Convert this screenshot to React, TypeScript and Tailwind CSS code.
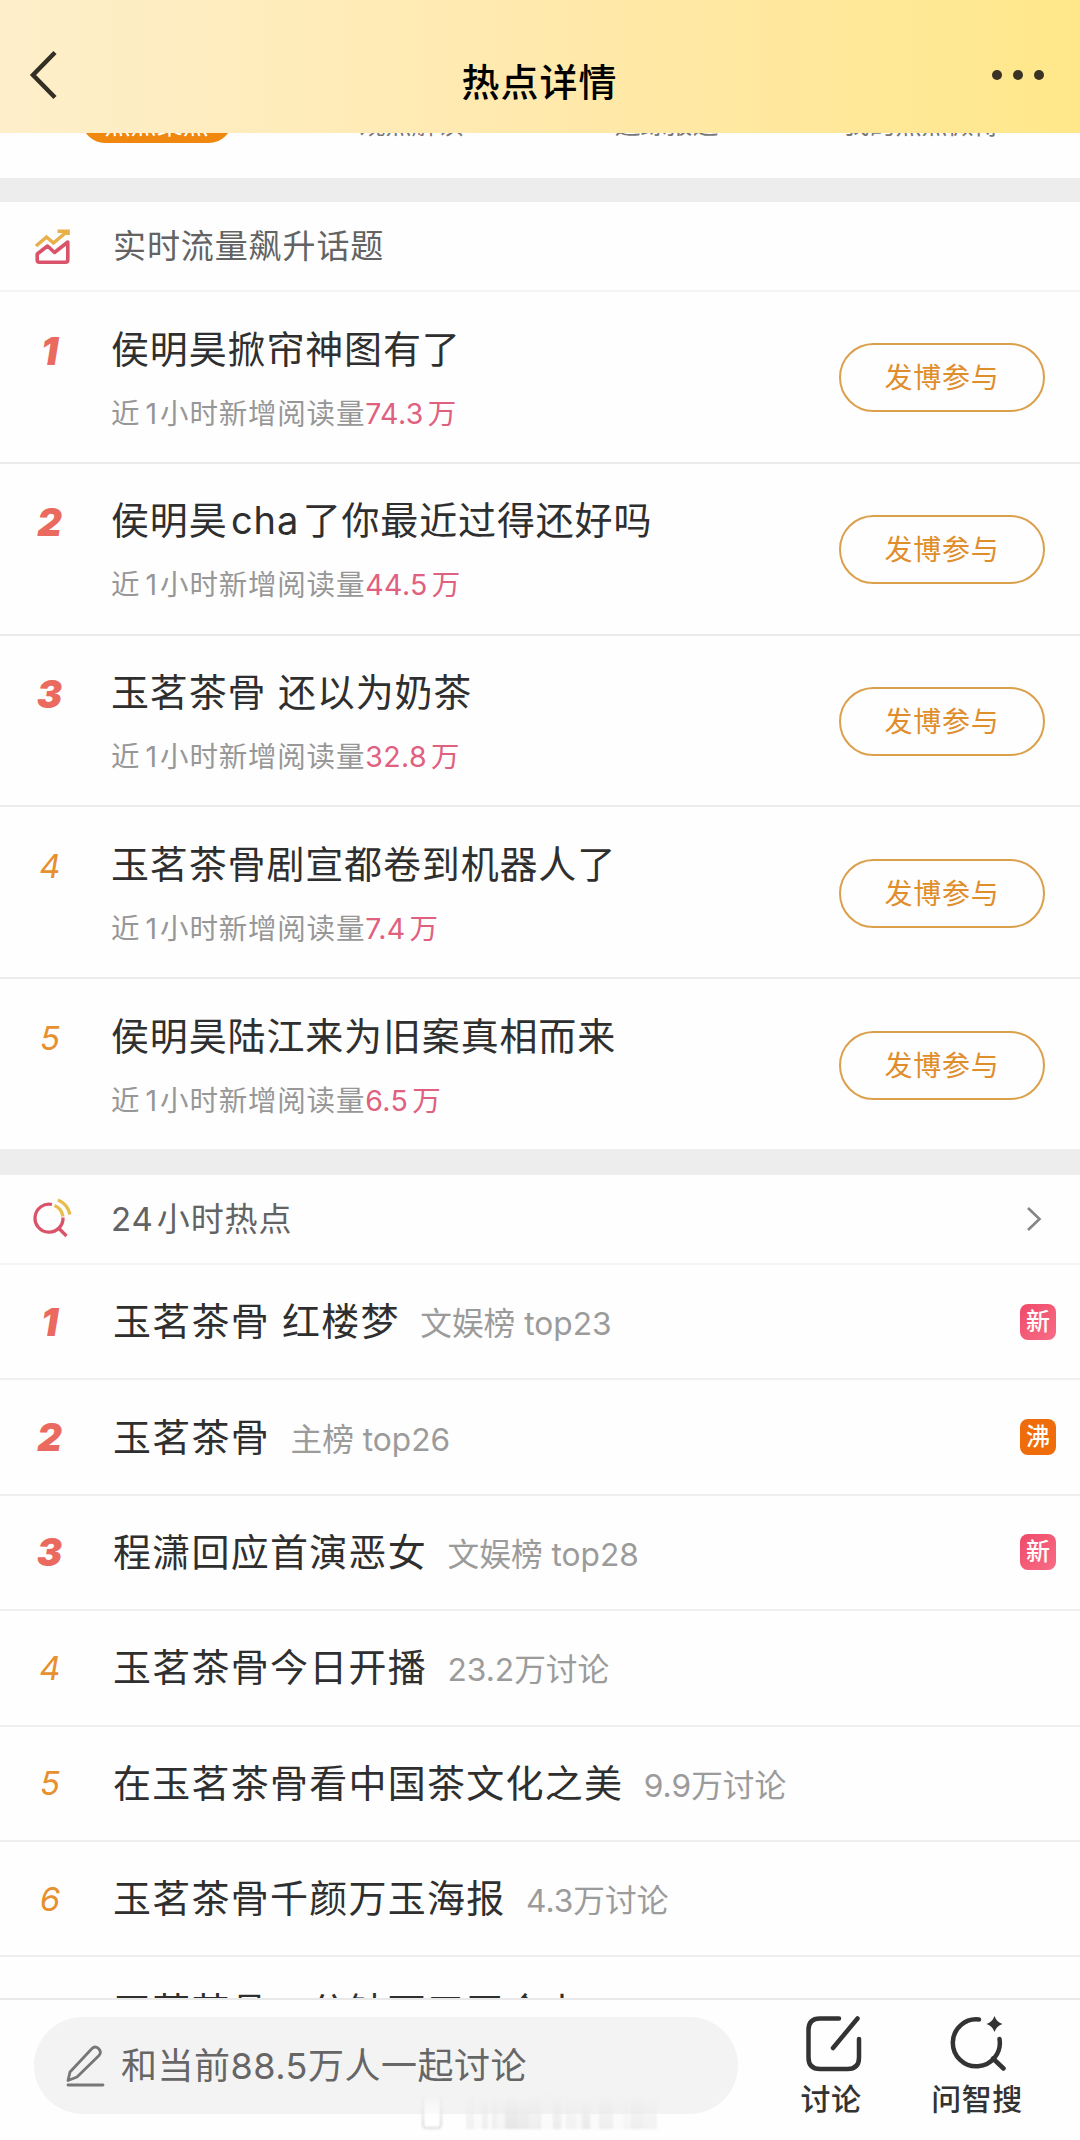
import type { ReactNode } from 'react';

const surging = [
  { title: ['侯明昊掀帘神图有了'], count: '74.3' },
  { title: ['侯明昊', 'cha', '了你最近过得还好吗'], count: '44.5' },
  { title: ['玉茗茶骨 还以为奶茶'], count: '32.8' },
  { title: ['玉茗茶骨剧宣都卷到机器人了'], count: '7.4' },
  { title: ['侯明昊陆江来为旧案真相而来'], count: '6.5' },
];

const daily = [
  { title: '玉茗茶骨 红楼梦', note: '文娱榜 top23', tag: '新' },
  { title: '玉茗茶骨', note: '主榜 top26', tag: '沸' },
  { title: '程潇回应首演恶女', note: '文娱榜 top28', tag: '新' },
  { title: '玉茗茶骨今日开播', note: '23.2万讨论' },
  { title: '在玉茗茶骨看中国茶文化之美', note: '9.9万讨论' },
  { title: '玉茗茶骨千颜万玉海报', note: '4.3万讨论' },
];

const tabs = ['热点聚焦', '观点解读', '追踪报道', '我的热点微博'];

// widths and strengths of the faded mark's vertical bands
const bands = [
  [8, 0.4], [8, 0.1], [6, 0.5], [4, 0.1], [5, 0.5], [8, 0.3], [12, 0.8], [12, 0.7], [8, 0.5], [4, 0.6], [12, 0.1],
  [8, 0.6], [5, 0.1], [10, 0.4], [6, 0.2], [8, 0.7], [9, 0.1], [14, 0.5], [10, 0.1], [8, 0.3], [12, 0.5], [14, 0.4],
];

function Rank({ value }: { value: number }) {
  return value <= 3 ? (
    <span className="w-full text-center text-[38px] leading-[40px] font-black italic text-[#ea6a60]">{value}</span>
  ) : (
    <span className="w-full pl-px text-center text-[33px] leading-[40px] italic text-[#e69030]">{value}</span>
  );
}

function Tag({ label }: { label: string }) {
  const color = label === '沸' ? 'bg-[#ee6c0a]' : 'bg-linear-to-br from-[#ee4a68] to-[#f86c86]';
  return (
    <span className={`flex size-9 items-center justify-center rounded-lg text-[24px] leading-none font-medium text-white ${color}`}>
      {label}
    </span>
  );
}

function SectionHeader({ icon, children, more }: { icon: ReactNode; children: ReactNode; more?: boolean }) {
  return (
    <div className="flex h-[90px] items-center border-b-2 border-[#f4f4f4]">
      <div className="flex w-[112px] shrink-0 pl-[30px]">{icon}</div>
      <h2 className="flex-1 text-[33px] leading-[44px] tracking-[0.9px] text-[#636363]">{children}</h2>
      {more && (
        <svg className="mr-[37px]" width="18" height="28" viewBox="0 0 18 28" fill="none" stroke="#858585" strokeWidth="2.6">
          <path d="M3 3L14.500 14L3 25" />
        </svg>
      )}
    </div>
  );
}

function TrendIcon() {
  return (
    <svg width="42" height="42" viewBox="0 0 42 42" fill="none" strokeWidth="3.600">
      <path d="M6 21L16.500 12L23.500 18L36.500 7M27.500 6.200H38V10" stroke="#e6b04a" />
      <path d="M37.800 17L24.500 27.500L17.500 21L7.200 29V35Q7.200 37.200 9.500 37.200H35.500Q37.800 37.200 37.800 35Z" stroke="#d9536a" strokeLinejoin="round" />
    </svg>
  );
}

function HotSearchIcon() {
  return (
    <svg width="44" height="44" viewBox="0 0 44 44" fill="none" strokeWidth="3.300">
      <path d="M22 7.500A14 14 0 1 0 33 20.500M29.500 32L36.500 39" stroke="#d9536a" />
      <path d="M24.500 8.500Q31.500 11.500 33 19.500M28 3Q37.500 7 40 17.500" stroke="#e9bd4c" />
    </svg>
  );
}

export default function App() {
  return (
    <div className="relative flex h-[2140px] w-[1080px] flex-col overflow-hidden bg-[#fefefe] font-['Inter','Noto_Sans_CJK_SC',sans-serif] whitespace-nowrap">
      <header className="flex h-[133px] shrink-0 items-center bg-linear-to-r from-[#feefcb] via-[#ffe9ac] to-[#ffe78a] pt-[33px]">
        <div className="flex w-[200px] pl-[28px]">
          <svg className="-mt-[16px]" width="32" height="52" viewBox="0 0 32 52" fill="none" stroke="#332f24" strokeWidth="4.500">
            <path d="M27 3.500L5 26L27 48.500" />
          </svg>
        </div>
        <h1 className="-mt-[1px] flex-1 pr-px text-center text-[38px] font-medium tracking-[1px] text-black">热点详情</h1>
        <div className="-mt-[16px] flex w-[200px] justify-end gap-[11px] pr-[36px]">
          <i className="size-[10px] rounded-full bg-[#3a3325]" />
          <i className="size-[10px] rounded-full bg-[#3a3325]" />
          <i className="size-[10px] rounded-full bg-[#3a3325]" />
        </div>
      </header>

      {/* tab strip, scrolled almost entirely under the header */}
      <nav className="flex h-[45px] shrink-0 items-start overflow-hidden pl-[29px] text-[26px] text-[#777]">
        {tabs.map((tab, i) => (
          <span key={tab} className="flex w-[255px] justify-center">
            <span
              className={
                i === 0
                  ? '-mt-[36px] h-[46px] w-[150px] rounded-full bg-[#f0870f] text-center leading-[55px] text-white'
                  : '-mt-[36px] h-[46px] leading-[55px]'
              }
            >
              {tab}
            </span>
          </span>
        ))}
      </nav>
      <div className="h-6 shrink-0 bg-[#ededed]" />

      <section className="shrink-0">
        <SectionHeader icon={<TrendIcon />}>
          <span className="ml-px">实时流量飙升话题</span>
        </SectionHeader>
        {surging.map((topic, i) => (
          <div key={i} className="flex h-[171.800px] items-center border-b-2 border-[#ebebeb] last:h-[169.800px] last:border-0">
            <div className="flex w-[111px] shrink-0 self-start pt-[38.500px] pr-[12px]">
              <Rank value={i + 1} />
            </div>
            <div className="flex-1 self-start pt-[29px]">
              <p className="flex h-[56px] items-center gap-[3.500px] text-[38px] tracking-[0.850px] text-[#2f2f2f]">
                {topic.title.map((part) => (
                  <span key={part}>{part}</span>
                ))}
              </p>
              <p className="mt-[17px] flex h-[40px] items-center text-[28.500px] text-[#979797]">
                <span>近</span>
                <span className="ml-[6px]">1</span>
                <span className="ml-[3px] tracking-[0.8px]">小时新增阅读量</span>
                <span className="tracking-[0.400px] text-[#e0607f]">{topic.count}</span>
                <span className="ml-[4px] text-[#e0607f]">万</span>
              </p>
            </div>
            <button className="mt-[2px] mr-[35px] h-[69px] w-[206px] rounded-full border-2 border-[#dba04c] pt-px text-[28px] tracking-[0.8px] text-[#e08d2c]">
              发博参与
            </button>
          </div>
        ))}
      </section>

      <div className="h-[26px] shrink-0 bg-[#ededed]" />

      <section className="min-h-0 flex-1 overflow-hidden">
        <SectionHeader icon={<HotSearchIcon />} more>
          <span className="-ml-[1px]">24</span>
          <span className="ml-[3px]">小时热点</span>
        </SectionHeader>
        {daily.map((item, i) => (
          <div key={item.title} className="flex h-[115.400px] items-center border-b-2 border-[#efefef] pr-[24px]">
            <div className="flex w-[113px] shrink-0 pr-[14px]">
              <Rank value={i + 1} />
            </div>
            <p className="flex flex-1 items-baseline">
              <span className="text-[38px] tracking-[1.250px] text-[#2f2f2f]">{item.title}</span>
              <span className="ml-[20.500px] text-[31.700px] text-[#9b9b9b]">{item.note}</span>
            </p>
            {item.tag && <Tag label={item.tag} />}
          </div>
        ))}
        <p className="pt-[26px] pl-[113px] text-[38px] tracking-[1.200px] text-[#2f2f2f]">玉茗茶骨一分钟两三玉合上</p>
      </section>

      <footer className="flex h-[142px] shrink-0 items-start border-t-2 border-[#e9e9e9] bg-[#fefefe]">
        <div className="mt-[17px] ml-[34px] flex h-[97px] w-[704px] items-center rounded-full bg-[#f3f3f3] pl-[31px] text-[36px] tracking-[0.500px] text-[#666]">
          <svg className="mr-[14px]" width="42" height="44" viewBox="0 0 42 44" fill="none" stroke="#777" strokeWidth="2.800" strokeLinecap="round" strokeLinejoin="round">
            <path d="M3 36.500L5 28L27 4.500Q30 1.500 33.500 4.500Q37 8 34 11.500L12 33Z" />
            <path d="M3 41H38" />
          </svg>
          和当前88.5万人一起讨论
        </div>
        <div className="mt-[14px] ml-[23px] flex w-[140px] flex-col items-center text-[30px] font-medium tracking-[0.500px] text-[#333]">
          <svg className="ml-[3px]" width="60" height="60" viewBox="0 0 60 60" fill="none" stroke="#333" strokeWidth="4.500" strokeLinecap="round">
            <path d="M36 4.500H17Q5.500 4.500 5.500 16V43.500Q5.500 55 17 55H44.500Q56 55 56 43.500V25M54.500 4.500L30 34" />
          </svg>
          <span className="mt-[5px] leading-[40px]">讨论</span>
        </div>
        <div className="mt-[14px] flex w-[152px] flex-col items-center text-[30px] font-medium tracking-[0.500px] text-[#333]">
          <svg className="ml-[2px]" width="60" height="60" viewBox="0 0 60 60" fill="none" stroke="#333" strokeWidth="4.500" strokeLinecap="round">
            <path d="M31 5.500A23.500 23.500 0 1 0 51.500 25M45 44.500L55.500 54.500" />
            <path d="M46.500 2Q48.500 8 54.500 10Q48.500 12 46.500 18Q44.500 12 38.500 10Q44.500 8 46.500 2Z" fill="#333" stroke="none" />
          </svg>
          <span className="mt-[5px] leading-[40px]">问智搜</span>
        </div>
      </footer>

      {/* faded mark over the bottom edge of the input */}
      <div className="pointer-events-none absolute top-[2095px] left-[422px] flex h-[34px] items-stretch blur-[1px]">
        <span className="mr-[24px] w-[20px] rounded-b-sm border-x-2 border-b-2 border-[#dcdcdc] bg-white mask-t-from-20%" />
        {bands.map(([width, opacity], i) => (
          <span key={i} className="bg-linear-to-b from-[#f3f3f3] to-[#dedede]" style={{ width, opacity }} />
        ))}
      </div>
    </div>
  );
}
